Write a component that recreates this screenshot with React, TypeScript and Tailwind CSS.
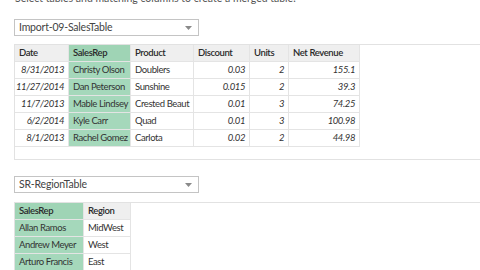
const sales = [
  { date: "8/31/2013", rep: "Christy Olson", product: "Doublers", discount: "0.03", units: "2", revenue: "155.1" },
  { date: "11/27/2014", rep: "Dan Peterson", product: "Sunshine", discount: "0.015", units: "2", revenue: "39.3" },
  { date: "11/7/2013", rep: "Mable Lindsey", product: "Crested Beaut", discount: "0.01", units: "3", revenue: "74.25" },
  { date: "6/2/2014", rep: "Kyle Carr", product: "Quad", discount: "0.01", units: "3", revenue: "100.98" },
  { date: "8/1/2013", rep: "Rachel Gomez", product: "Carlota", discount: "0.02", units: "2", revenue: "44.98" },
];

const regions = [
  { rep: "Allan Ramos", region: "MidWest" },
  { rep: "Andrew Meyer", region: "West" },
  { rep: "Arturo Francis", region: "East" },
  { rep: "", region: "" },
];

function Dropdown({ label }: { label: string }) {
  return (
    <div className="flex items-center justify-between w-[185px] h-[17px] border border-[#c4c4c4] bg-white pl-[4px] pr-[6px]">
      <span className="text-[10.5px] tracking-[-0.2px] leading-none text-[#444]">{label}</span>
      <svg width="7" height="4" viewBox="0 0 7 4">
        <path d="M0 0 L7 0 L3.5 4 Z" fill="#8a8a8a" />
      </svg>
    </div>
  );
}

export default function App() {
  const cell = "h-[17px] flex items-center px-[4px] border-r border-b border-[#e4e4e4] text-[9.5px] tracking-[-0.4px] leading-none whitespace-nowrap overflow-hidden";
  const num = cell + " justify-end italic";
  const head = cell + " bg-[#efefef] font-semibold text-[#2a2a2a]";
  const green = "bg-[#a5d8bb]";

  return (
    <div className="w-[480px] h-[270px] overflow-hidden bg-white text-[#333] font-['Lato',sans-serif]">
      <p className="pl-[15px] mt-[-9px] h-[12px] text-[10.5px] leading-[14px] text-[#555]">
        Select tables and matching columns to create a merged table.
      </p>
      <div className="pl-[14px]">
        <div className="mt-[16px]">
          <Dropdown label="Import-09-SalesTable" />
        </div>
        <div className="mt-[8px] h-[116px] border-y border-l border-[#e2e2e2]">
          <div className="grid grid-cols-[54px_62px_63px_56px_39px_71px] w-[345px]">
            <div className={head}>Date</div>
            <div className={head + " !bg-[#9fd4b5]"}>SalesRep</div>
            <div className={head}>Product</div>
            <div className={head}>Discount</div>
            <div className={head}>Units</div>
            <div className={head}>Net Revenue</div>
            {sales.map((r, i) => (
              <>
                <div key={"d" + i} className={num}>{r.date}</div>
                <div key={"r" + i} className={cell + " " + green}>{r.rep}</div>
                <div key={"p" + i} className={cell}>{r.product}</div>
                <div key={"c" + i} className={num}>{r.discount}</div>
                <div key={"u" + i} className={num}>{r.units}</div>
                <div key={"n" + i} className={num}>{r.revenue}</div>
              </>
            ))}
          </div>
        </div>
        <div className="mt-[16px]">
          <Dropdown label="SR-RegionTable" />
        </div>
        <div className="mt-[9px] border-t border-l border-[#e2e2e2] h-[80px]">
          <div className="grid grid-cols-[69px_47px] w-[116px]">
            <div className={head + " !bg-[#9fd4b5]"}>SalesRep</div>
            <div className={head}>Region</div>
            {regions.map((r, i) => (
              <>
                <div key={"a" + i} className={cell + " " + green}>{r.rep}</div>
                <div key={"b" + i} className={cell}>{r.region}</div>
              </>
            ))}
          </div>
        </div>
      </div>
    </div>
  );
}
